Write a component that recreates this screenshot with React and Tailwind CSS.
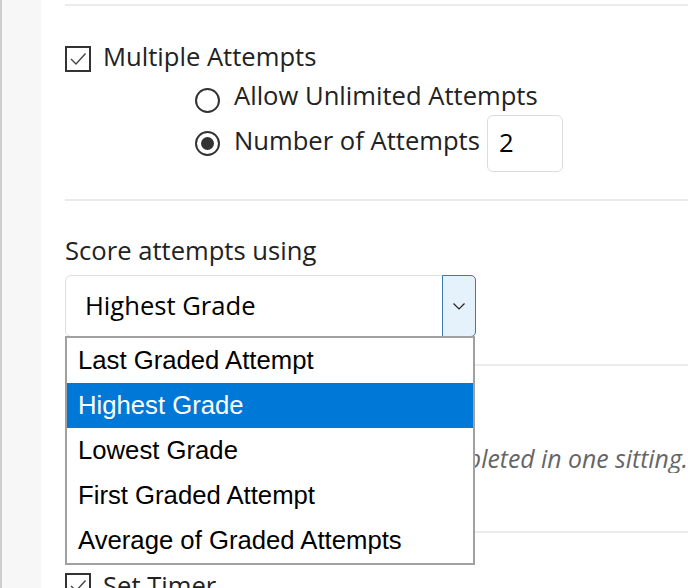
import React from "react";

function Check() {
  return (
    <div className="w-[26px] h-[26px] border-2 border-[#333] flex items-center justify-center shrink-0 bg-white">
      <svg width="22" height="22" viewBox="0 0 22 22" fill="none">
        <path d="M4 11 L9 16 L18.5 5.5" stroke="#444" strokeWidth="1.4" />
      </svg>
    </div>
  );
}

function Radio({ on }) {
  return (
    <div className="w-[25px] h-[25px] rounded-full border-2 border-[#333] flex items-center justify-center shrink-0 bg-white">
      {on && <div className="w-[13px] h-[13px] rounded-full bg-[#333]" />}
    </div>
  );
}

const items = [
  "Last Graded Attempt",
  "Highest Grade",
  "Lowest Grade",
  "First Graded Attempt",
  "Average of Graded Attempts",
];

export default function App() {
  return (
    <div
      className="w-[688px] h-[588px] overflow-hidden flex bg-white text-[#222]"
      style={{ fontFamily: "'Open Sans', sans-serif" }}
    >
      <div className="w-[41px] shrink-0 bg-[#f7f7f7] border-l-2 border-[#cfcfcf]" />
      <div className="flex-1 pl-[24px] relative flex flex-col">
        <div className="h-[4px] shrink-0" />
        <div className="h-[2px] bg-[#ebebeb] shrink-0" />
        <div className="h-[40px] shrink-0" />
        <div className="flex items-center gap-[12px] h-[26px] shrink-0">
          <Check />
          <span className="text-[25.6px] leading-none mt-[-4px]">Multiple Attempts</span>
        </div>
        <div className="pl-[130px] flex flex-col">
          <div className="h-[16px]" />
          <div className="flex items-center gap-[14px] h-[25px]">
            <Radio />
            <span className="text-[25.6px] leading-none mt-[-9px]">Allow Unlimited Attempts</span>
          </div>
          <div className="flex items-center gap-[14px] h-[57px] mt-[2px]">
            <Radio on />
            <span className="text-[25.6px] leading-none mt-[-5px]">Number of Attempts</span>
            <div className="ml-[-7px] w-[76px] h-[57px] border-[1.5px] border-[#dcdcdc] rounded-[6px] flex items-center pl-[11px] text-[25.6px] text-black">
              2
            </div>
          </div>
        </div>
        <div className="h-[27px] shrink-0" />
        <div className="h-[2px] bg-[#ebebeb] shrink-0" />
        <div className="h-[35px] shrink-0" />
        <div className="text-[25.6px] leading-[30px] shrink-0">Score attempts using</div>
        <div className="h-[9px] shrink-0" />
        <div className="w-[411px] h-[62px] border-[1.5px] border-[#dedede] rounded-[6px] flex shrink-0">
          <div className="flex-1 flex items-center pl-[19px] text-[25.6px] text-black">Highest Grade</div>
          <div className="w-[34px] mt-[-1px] mb-[-1px] mr-[-1px] bg-[#e5f1fb] border border-[#3c78b4] rounded-r-[5px] flex items-center justify-center">
            <svg width="14" height="10" viewBox="0 0 14 10" fill="none">
              <path d="M1.5 2.5 L7 8 L12.5 2.5" stroke="#222" strokeWidth="1.2" />
            </svg>
          </div>
        </div>
        <div className="h-[27px] shrink-0" />
        <div className="h-[2px] bg-[#ebebeb] shrink-0" />
        <div className="h-[30px] shrink-0" />
        <div className="flex items-center gap-[12px] h-[26px] shrink-0">
          <Check />
          <span className="text-[25.6px] leading-none">Force Completion</span>
        </div>
        <div className="h-[21px] shrink-0" />
        <div className="flex justify-end overflow-hidden whitespace-nowrap shrink-0">
          <span className="text-[24.8px] leading-[30px] italic text-[#666]">
            Once started, this test must be completed in one sitting.
          </span>
        </div>
        <div className="h-[58px] shrink-0" />
        <div className="h-[2px] bg-[#ebebeb] shrink-0" />
        <div className="h-[40px] shrink-0" />
        <div className="flex items-center gap-[12px] h-[26px] shrink-0">
          <Check />
          <span className="text-[25.6px] leading-none">Set Timer</span>
        </div>

        <div
          className="absolute left-[24px] top-[336px] w-[410px] bg-white border-2 border-[#a0a0a0] flex flex-col"
          style={{ fontFamily: "'Liberation Sans', Arial, sans-serif" }}
        >
          {items.map((t, i) => (
            <div
              key={t}
              className={
                "h-[45px] flex items-center pl-[11px] text-[25.7px] " +
                (i === 1 ? "bg-[#0078d7] text-white" : "text-black")
              }
            >
              {t}
            </div>
          ))}
        </div>
      </div>
    </div>
  );
}
